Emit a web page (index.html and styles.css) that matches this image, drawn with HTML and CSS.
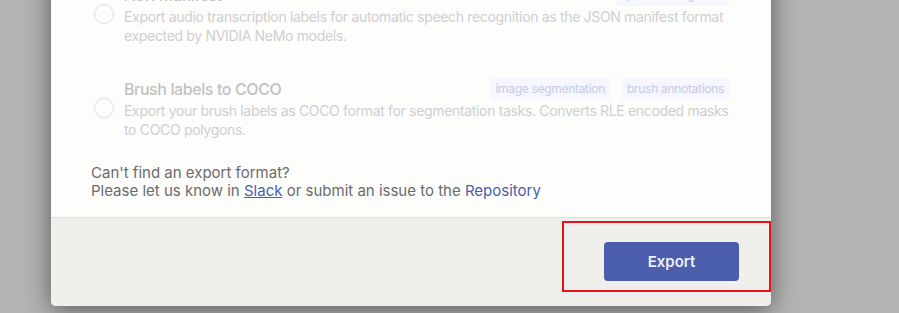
FILE: index.html
```html
<!DOCTYPE html>
<html>
<head>
    <title>Export</title>
    <link rel="stylesheet" href="styles.css">
</head>
<body>
    <div class="overlay">
        <div class="modal">
            <div class="modal-body">
                <div class="format disabled">
                    <span class="radio"></span>
                    <div class="format-info">
                        <div class="format-head">
                            <span class="format-title">ASR Manifest</span>
                            <div class="tags">
                                <span class="tag">speech recognition</span>
                            </div>
                        </div>
                        <div class="format-desc">Export audio transcription labels for automatic speech recognition as the JSON manifest format expected by NVIDIA NeMo models.</div>
                    </div>
                </div>
                <div class="format disabled">
                    <span class="radio"></span>
                    <div class="format-info">
                        <div class="format-head">
                            <span class="format-title">Brush labels to COCO</span>
                            <div class="tags">
                                <span class="tag">image segmentation</span>
                                <span class="tag">brush annotations</span>
                            </div>
                        </div>
                        <div class="format-desc">Export your brush labels as COCO format for segmentation tasks. Converts RLE encoded masks to COCO polygons.</div>
                    </div>
                </div>
                <div class="help">
                    Can't find an export format?<br>
                    Please let us know in <a class="slack" href="#">Slack</a> or submit an issue to the <a class="repo" href="#">Repository</a>
                </div>
            </div>
            <div class="modal-footer">
                <button class="export-btn">Export</button>
                <div class="highlight"></div>
            </div>
        </div>
    </div>
</body>
</html>
```

FILE: styles.css
```css
html, body {
    margin: 0;
    height: 100%;
    overflow: hidden;
}

body {
    font-family: Inter, "Noto Sans", sans-serif;
    background: #b3b3b1;
}

.overlay {
    display: flex;
    align-items: flex-start;
    padding-left: 51px;
}

.modal {
    width: 720px;
    margin-top: -33px;
    background: #fdfdfc;
    border-radius: 0 0 5px 5px;
    box-shadow: 0 4px 24px rgba(0, 0, 0, 0.5);
    overflow: hidden;
}

.modal-body {
    padding: 0 40px 17px;
}

.format {
    display: flex;
    align-items: center;
    padding: 16px 0;
}

.radio {
    flex: none;
    width: 18px;
    height: 18px;
    border: 1px solid #dcdcdc;
    border-radius: 50%;
    margin: 0 10px 0 3px;
}

.format-info {
    flex: 1;
}

.format-head {
    display: flex;
    justify-content: space-between;
    align-items: center;
    height: 24px;
}

.format-title {
    font-size: 16px;
    font-weight: 500;
    letter-spacing: -0.4px;
    color: #c2c2c2;
}

.tags {
    display: flex;
    gap: 12px;
    margin-right: 2px;
}

.tag {
    background: #f5f6fe;
    color: #c6cae6;
    font-size: 12px;
    letter-spacing: -0.3px;
    line-height: 22px;
    padding: 0 5px;
    border-radius: 3px;
}

.format-desc {
    font-size: 14px;
    letter-spacing: -0.33px;
    line-height: 19px;
    color: #cfcfcf;
}

.help {
    margin-top: 9px;
    font-size: 15px;
    line-height: 18px;
    color: #6b6b6b;
}

.slack {
    color: #4b5eab;
}

.repo {
    color: #4b5eab;
    text-decoration: none;
}

.modal-footer {
    position: relative;
    display: flex;
    justify-content: flex-end;
    padding: 24px 32px 25px;
    background: #f0efec;
    border-top: 1px solid #e1dfdb;
}

.export-btn {
    width: 135px;
    height: 39px;
    border: none;
    border-radius: 4px;
    background: #4b5eab;
    color: #eef0f8;
    font-family: Inter, sans-serif;
    font-size: 15px;
    font-weight: 600;
}

.highlight {
    position: absolute;
    top: 3px;
    right: 0;
    width: 205px;
    height: 67px;
    border: 2px solid #e8141d;
}
```
